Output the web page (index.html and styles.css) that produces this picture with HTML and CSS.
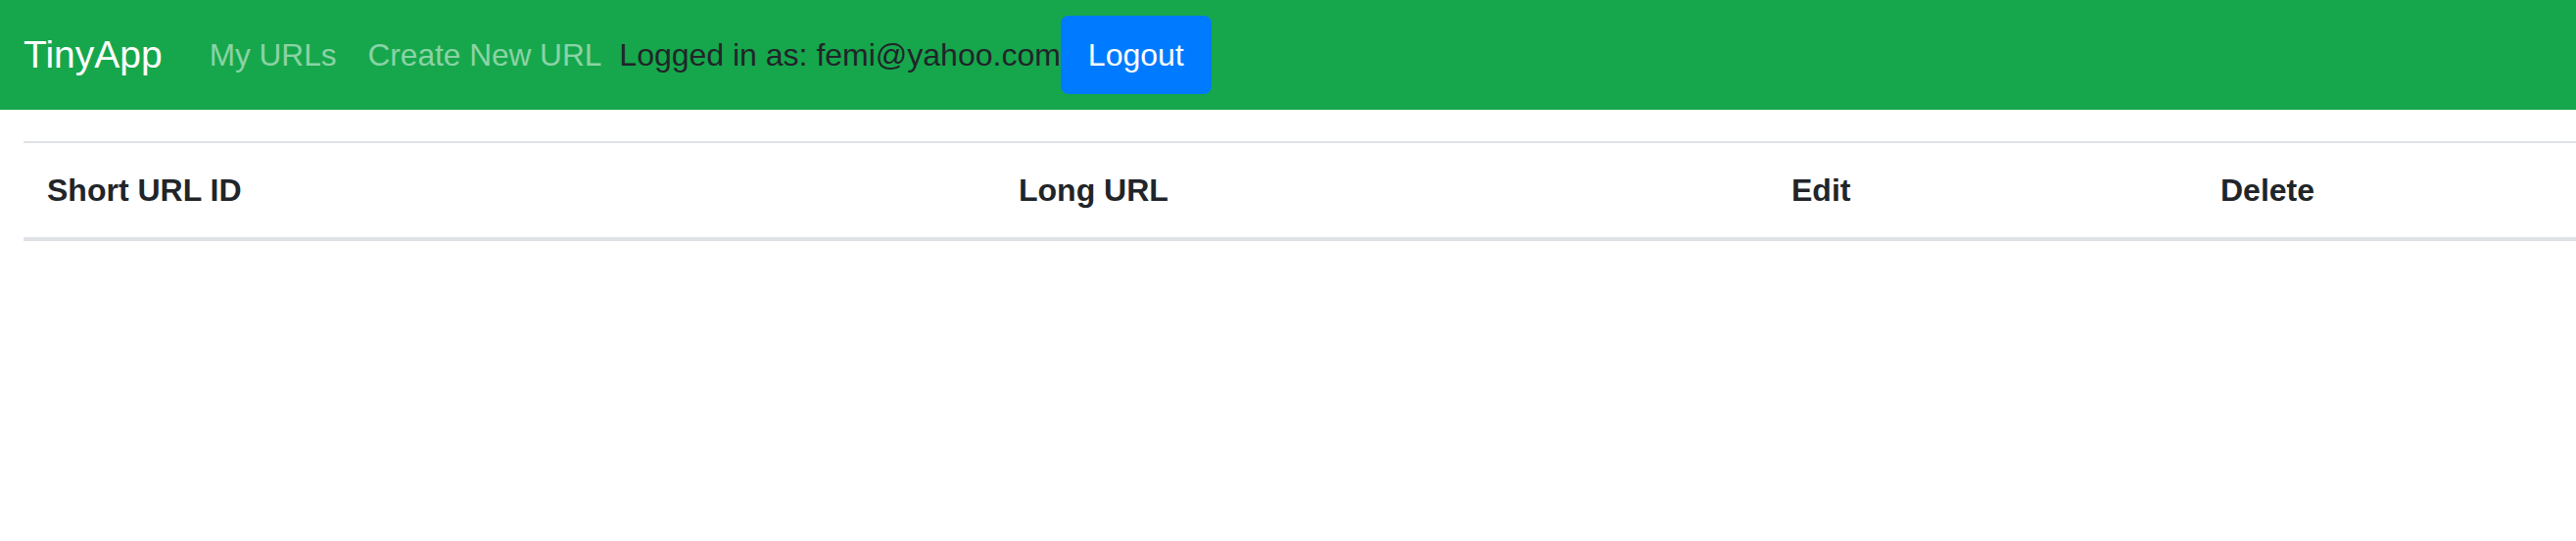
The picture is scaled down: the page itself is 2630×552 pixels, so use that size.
FILE: index.html
```html
<!DOCTYPE html>
<html lang="en">
<head>
<meta charset="utf-8">
<title>TinyApp</title>
<link rel="stylesheet" href="styles.css">
</head>
<body>
<nav class="navbar">
  <a class="brand" href="#">TinyApp</a>
  <div class="nav-links">
    <a class="nav-link" href="#">My URLs</a>
    <a class="nav-link" href="#">Create New URL</a>
  </div>
  <div class="user">
    <span class="user-text">Logged in as: femi@yahoo.com</span>
    <button class="btn-logout" type="button">Logout</button>
  </div>
</nav>
<main class="content">
  <table class="url-table">
    <colgroup>
      <col class="c1"><col class="c2"><col class="c3"><col class="c4">
    </colgroup>
    <thead>
      <tr>
        <th>Short URL ID</th>
        <th>Long URL</th>
        <th>Edit</th>
        <th>Delete</th>
      </tr>
    </thead>
    <tbody></tbody>
  </table>
</main>
</body>
</html>
```
FILE: styles.css
```css
html {
  overflow: hidden;
}
body {
  margin: 0;
  font-family: "Liberation Sans", Arial, sans-serif;
  color: #212529;
  background: #ffffff;
}
.navbar {
  display: flex;
  align-items: center;
  height: 112px;
  box-sizing: border-box;
  padding: 16px 24px;
  background: #16a74c;
}
.brand {
  font-size: 39px;
  line-height: 60px;
  color: #ffffff;
  text-decoration: none;
  margin-right: 32px;
}
.nav-links {
  display: flex;
}
.nav-link {
  font-size: 31.6px;
  line-height: 48px;
  padding: 0 16px;
  color: rgba(255, 255, 255, 0.5);
  text-decoration: none;
}
.user {
  display: flex;
  align-items: center;
  margin-left: 2px;
}
.user-text {
  font-size: 32px;
  line-height: 48px;
  color: #212529;
}
.btn-logout {
  font-family: "Liberation Sans", Arial, sans-serif;
  font-size: 32px;
  line-height: 48px;
  padding: 16px 28px;
  border: 0;
  border-radius: 8px;
  background: #007bff;
  color: #ffffff;
}
.content {
  padding: 32px 0 0 24px;
}
.url-table {
  table-layout: fixed;
  border-collapse: collapse;
  width: 2619px;
}
.c1 { width: 992px; }
.c2 { width: 789px; }
.c3 { width: 438px; }
.c4 { width: 400px; }
.url-table th {
  text-align: left;
  font-size: 32px;
  line-height: 48px;
  font-weight: bold;
  padding: 24px;
  border-top: 2px solid #dee2e6;
  border-bottom: 4px solid #dee2e6;
}
```
